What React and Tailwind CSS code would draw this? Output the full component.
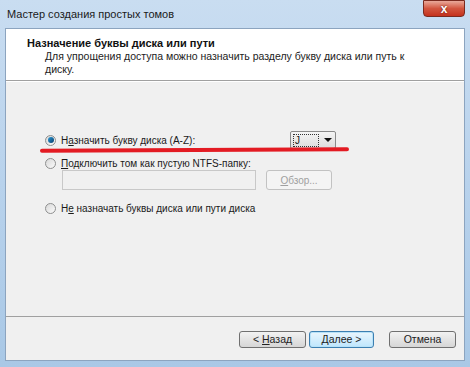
import React from "react";

const font = { fontFamily: '"Liberation Sans", Arial, sans-serif' };

const Radio = ({ checked }) => (
  <span className="w-[11px] h-[11px] rounded-full border border-[#8e8f8f] bg-gradient-to-br from-[#d8d8d8] to-[#fbfbfb] flex items-center justify-center shrink-0">
    {checked && (
      <span className="w-[6px] h-[6px] rounded-full bg-gradient-to-br from-[#2a9ad6] to-[#0a3f6e]" />
    )}
  </span>
);

const Btn = ({ children, focused, className = "" }) => (
  <div
    className={
      "h-[17px] flex items-center justify-center rounded-[3px] border text-[10.5px] text-[#222] " +
      (focused
        ? "border-[#3c7fb1] bg-gradient-to-b from-[#eaf6fd] to-[#bee6fd] shadow-[inset_0_0_0_1px_#b8e2f8] "
        : "border-[#707070] bg-gradient-to-b from-[#f2f2f2] to-[#d6d6d6] ") +
      className
    }
  >
    {children}
  </div>
);

export default function App() {
  return (
    <div
      className="w-[470px] h-[367px] overflow-hidden flex flex-col bg-gradient-to-b from-[#c9ddf1] via-[#b8d2ec] to-[#a9c8e6]"
      style={font}
    >
      {/* title bar */}
      <div className="h-[28px] flex items-start justify-between shrink-0">
        <span className="pl-[7px] pt-[6px] text-[11px] text-[#1a1a1a]">
          Мастер создания простых томов
        </span>
        <div className="mr-[5px] w-[42px] h-[17px] rounded-b-[4px] border border-[#7a2a1f] bg-gradient-to-b from-[#e8a89a] via-[#d2553f] to-[#c4311c] flex items-center justify-center">
          <span className="text-white text-[12px] font-bold leading-none [text-shadow:0_0_2px_#5a1208]">
            x
          </span>
        </div>
      </div>

      {/* client */}
      <div className="ml-[5px] w-[460px] h-[333px] border border-[#8ca4bf] flex flex-col bg-[#f0f0f0]">
        {/* header */}
        <div className="h-[52px] bg-white border-b border-[#a0a0a0] pl-[21px] pt-[7px] shrink-0">
          <div className="text-[11px] font-bold text-[#111] leading-[14px]">
            Назначение буквы диска или пути
          </div>
          <div className="pl-[18px] text-[10.5px] text-[#222] leading-[13px] whitespace-nowrap">
            Для упрощения доступа можно назначить разделу букву диска или путь к
            <br />
            диску.
          </div>
        </div>

        {/* body */}
        <div className="flex-1 border-t border-white pl-[39px] pt-[51px] text-[10px] text-[#1a1a1a] relative">
          <div className="flex items-center gap-[5px] h-[14px]">
            <Radio checked />
            <span className="w-[224px]">
              Н<span className="underline">а</span>значить букву диска (A-Z):
            </span>
            <div className="w-[46px] h-[18px] border border-[#8a8a8a] rounded-[2px] bg-gradient-to-b from-[#f5f5f5] to-[#dcdcdc] flex items-center px-[2px]">
              <span className="w-[26px] h-[13px] border border-dotted border-[#333] text-[10px] leading-[11px] pl-[1px]">
                J
              </span>
              <span className="ml-[5px] w-0 h-0 border-l-[4px] border-r-[4px] border-t-[4px] border-l-transparent border-r-transparent border-t-[#111]" />
            </div>
          </div>
          {/* red marker line */}
          <div className="absolute left-[34px] top-[66px] w-[309px] h-[4px] rounded-full bg-[#e31b23] -rotate-[0.3deg]" />

          <div className="flex items-center gap-[5px] h-[14px] mt-[9px]">
            <Radio />
            <span>
              <span className="underline">П</span>одключить том как пустую NTFS-папку:
            </span>
          </div>
          <div className="flex items-center gap-[10px] pl-[17px]">
            <div className="w-[194px] h-[20px] border border-[#c8c8c8] bg-[#f0f0f0]" />
            <div className="w-[66px] h-[20px] border border-[#c2c2c2] rounded-[3px] bg-[#f4f4f4] flex items-center justify-center text-[#a0a0a0]">
              <span className="underline">О</span>бзор...
            </div>
          </div>

          <div className="flex items-center gap-[5px] h-[14px] mt-[11px]">
            <Radio />
            <span>
              Н<span className="underline">е</span> назначать буквы диска или пути диска
            </span>
          </div>
        </div>

        {/* footer */}
        <div className="h-[44px] shrink-0 border-t border-[#a0a0a0] flex items-start pt-[14px] pl-[233px]">
          <Btn className="w-[67px]">
            &lt; <span className="underline ml-[3px]">Н</span>азад
          </Btn>
          <Btn focused className="w-[65px] ml-[3px]">
            <span className="underline">Д</span>алее &gt;
          </Btn>
          <Btn className="w-[67px] ml-[15px]">Отмена</Btn>
        </div>
      </div>
    </div>
  );
}
